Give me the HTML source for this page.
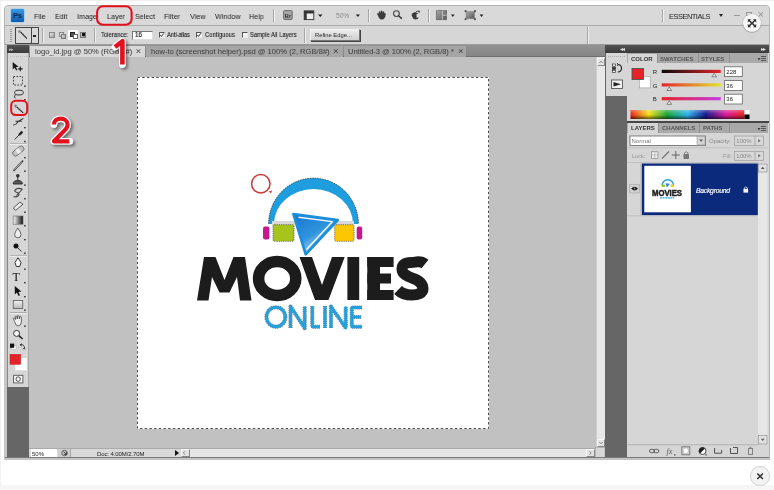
<!DOCTYPE html>
<html><head><meta charset="utf-8">
<style>
*{margin:0;padding:0;box-sizing:border-box}
html,body{width:774px;height:490px;overflow:hidden;background:#fff;font-family:"Liberation Sans",sans-serif;position:relative}
.a{position:absolute}
.t{position:absolute;white-space:nowrap;color:#1e1e1e;line-height:1;will-change:transform}
.m{font-size:8px;top:12.5px;color:#222;transform:scaleX(.9);transform-origin:0 0}
.o{font-size:7.4px;top:31.3px;color:#1a1a1a;-webkit-text-stroke:0.1px #1a1a1a;transform:scaleX(.8);transform-origin:0 0}
.tb{font-size:7.6px;top:47.6px;color:#444;-webkit-text-stroke:0.05px #444}
.sep{position:absolute;width:1px;background:#a6a6a6;box-shadow:1px 0 0 #f0f0f0}
.tri{position:absolute;width:0;height:0;border-left:2px solid transparent;border-right:2px solid transparent;border-top:3px solid #222}
.cb{position:absolute;width:6px;height:6px;border:1px solid #555;border-right-color:#eee;border-bottom-color:#eee;background:#f4f4f4}
svg{position:absolute;overflow:visible}
</style></head><body>
<div class="a" style="left:0;top:0;width:774px;height:1px;background:#f0f0f0"></div>
<div class="a" style="left:0;top:0;width:1px;height:490px;background:#f2f2f2"></div>
<!-- window frame -->
<div class="a" style="left:4px;top:5px;width:766px;height:454px;background:#d6d6d6;border:1px solid #b4b4b4;border-radius:4px 4px 0 0"></div>
<!-- menu bar -->
<div class="a" style="left:5px;top:6px;width:764px;height:19px;background:#d9d9d9;border-radius:3px 3px 0 0"></div>
<div class="a" style="left:5px;top:25px;width:764px;height:1px;background:#ababab"></div>
<!-- options bar -->
<div class="a" style="left:5px;top:26px;width:764px;height:18px;background:#d6d6d6"></div>
<div class="a" style="left:5px;top:44px;width:764px;height:1px;background:#9c9c9c"></div>

<!-- Ps logo -->
<div class="a" style="left:11px;top:9.2px;width:13px;height:12.8px;background:linear-gradient(#3a98e0,#0c5cb0);border-radius:1px;box-shadow:0 0 0 0.8px #a8cdec"></div>
<div class="t" style="left:12.6px;top:11.6px;font-size:7.6px;font-weight:700;color:#0a2550;letter-spacing:-0.2px">Ps</div>

<!-- menu items -->
<div class="t m" style="left:34px">File</div>
<div class="t m" style="left:55px">Edit</div>
<div class="t m" style="left:76.5px">Image</div>
<div class="t m" style="left:106.8px">Layer</div>
<div class="t m" style="left:134.5px">Select</div>
<div class="t m" style="left:163.5px">Filter</div>
<div class="t m" style="left:189.7px">View</div>
<div class="t m" style="left:214.6px">Window</div>
<div class="t m" style="left:249.4px">Help</div>

<!-- Br -->
<svg style="left:0;top:0" width="774" height="30" viewBox="0 0 774 30">
<defs><linearGradient id="ig" x1="0" y1="0" x2="1" y2="1"><stop offset="0" stop-color="#aaa"/><stop offset="1" stop-color="#555"/></linearGradient></defs>
<rect x="283.6" y="10.6" width="8.6" height="8.9" rx="1" fill="#a8a8a8" stroke="#606060" stroke-width="0.9"/>
<text x="284.8" y="17.6" font-family="Liberation Sans" font-weight="700" font-size="5.8" fill="#333">Br</text>
<rect x="304.2" y="10.9" width="9.6" height="8.7" fill="#eee" stroke="#333" stroke-width="0.9"/>
<rect x="304.2" y="10.9" width="9.6" height="2.6" fill="#333"/>
<rect x="304.2" y="10.9" width="2.5" height="8.7" fill="#333"/>
<path d="M318 14.4 H322.6 L320.3 17 Z" fill="#222"/>
<text x="336" y="17.8" font-family="Liberation Sans" font-size="6.6" fill="#8a8a8a">50%</text>
<path d="M355.8 14.4 H360 L357.9 17 Z" fill="#222"/>
<path d="M378 15.5 Q376.5 13.5 377.3 13 Q378.2 12.8 378.8 14 L378.8 11.8 Q379.4 10.9 380.2 11.8 L380.5 13 L380.8 10.8 Q381.6 10.2 382.3 11 L382.4 13 L382.9 11.5 Q383.8 11 384.3 12 L384.3 13.5 Q385 12.8 385.8 13.4 L385.3 16.5 Q384.5 19.6 381.5 19.6 Q379.2 19.5 378 15.5 Z" fill="#3a3a3a"/>
<circle cx="396.4" cy="13.6" r="2.9" fill="none" stroke="#444" stroke-width="1.1"/>
<path d="M398.5 15.7 L401.8 18.6" stroke="#333" stroke-width="1.5"/>
<path d="M412 16 Q411 13.5 413 13 L415 12 Q417 12.5 418.5 14 L419 17 Q418 19.6 415.5 19.6 Q413 19.5 412 16 Z" fill="#3a3a3a"/>
<path d="M416 11.5 Q418.5 10 419.5 12.5" fill="none" stroke="#444" stroke-width="0.9"/>
<path d="M418.8 10 L420.2 11.8 L418.3 12.4 Z" fill="#444"/>
<rect x="416.5" y="14" width="2.5" height="3.5" fill="#ddd"/>
<rect x="436.6" y="10.7" width="10" height="9" fill="url(#ig)" stroke="#666" stroke-width="0.8"/>
<path d="M442.4 10.7 V19.7 M442.4 15.2 H446.6" stroke="#ddd" stroke-width="0.7"/>
<path d="M451 14.4 H454.6 L452.8 16.9 Z" fill="#222"/>
<rect x="466" y="11.6" width="8.6" height="7.2" fill="url(#ig)" stroke="#888" stroke-width="0.6"/>
<circle cx="465.6" cy="11.2" r="1.1" fill="#555"/><circle cx="475" cy="11.2" r="1.1" fill="#555"/>
<circle cx="465.6" cy="19.2" r="1.1" fill="#555"/><circle cx="475" cy="19.2" r="1.1" fill="#555"/>
<path d="M479.6 14.4 H483.4 L481.5 16.9 Z" fill="#222"/>
</svg>
<div class="sep" style="left:273px;top:9px;height:13px"></div>
<div class="sep" style="left:367.5px;top:9px;height:13px"></div>
<div class="sep" style="left:428px;top:9px;height:13px"></div>
<div class="sep" style="left:662px;top:9px;height:13px"></div>
<div class="t" style="left:669px;top:12.5px;font-size:7.4px;color:#222;letter-spacing:-0.45px">ESSENTIALS</div>
<div class="tri" style="left:719px;top:14px"></div>
<div class="a" style="left:734.3px;top:15.2px;width:5.7px;height:1px;background:#999"></div>
<svg style="left:0;top:0" width="774" height="30" viewBox="0 0 774 30"><path d="M758.3 12 L763.2 16.8 M763.2 12 L758.3 16.8" stroke="#888" stroke-width="0.9"/></svg>
<div class="a" style="left:746px;top:12px;width:5.5px;height:4px;border:1px solid #999;border-top-width:1.5px"></div>

<!-- ============ options bar ============ -->
<div class="a" style="left:9.5px;top:29px;width:2px;height:13px;background:repeating-linear-gradient(#9a9a9a 0 1px,transparent 1px 2px)"></div>
<div class="a" style="left:15px;top:27px;width:24px;height:17px;border:1px solid #444;background:#d8d8d8"></div>
<div class="a" style="left:31px;top:27px;width:1px;height:17px;background:#444"></div>
<svg style="left:17px;top:29px" width="13" height="12" viewBox="0 0 13 12"><path d="M3.5 3 L10 9.6" stroke="#2a2a2a" stroke-width="1.1"/><path d="M0.8 2.5 H4.2 M2.5 0.8 V4.2 M1.3 1.3 L3.7 3.7 M3.7 1.3 L1.3 3.7" stroke="#777" stroke-width="0.5"/></svg>
<div class="a" style="left:33.5px;top:35px;width:2px;height:1px;border-top:1px solid #222"></div>
<div class="a" style="left:33px;top:34.5px;width:3px;height:2px;background:#222"></div>
<div class="sep" style="left:41.5px;top:28px;height:15px"></div>
<!-- selection modes -->
<div class="a" style="left:49px;top:32px;width:5.8px;height:6.3px;background:linear-gradient(135deg,#e8e8e8,#9c9c9c);border:0.8px solid #888"></div>
<div class="a" style="left:58.6px;top:31.6px;width:5.2px;height:5.2px;background:linear-gradient(135deg,#eee,#aaa);border:0.8px solid #888"></div>
<div class="a" style="left:60.8px;top:33.6px;width:5.2px;height:5.2px;background:linear-gradient(135deg,#e4e4e4,#999);border:0.8px solid #777"></div>
<div class="a" style="left:68.3px;top:29.6px;width:10.2px;height:10.4px;background:#fafafa"></div>
<div class="a" style="left:70.3px;top:31.6px;width:5.2px;height:5.2px;background:#555;border:0.8px solid #222"></div>
<div class="a" style="left:72.6px;top:33.8px;width:5.2px;height:5.2px;background:#fff;border:0.8px solid #666"></div>
<div class="a" style="left:80.4px;top:31.6px;width:5.6px;height:6.4px;background:linear-gradient(135deg,#ddd,#888);border:0.8px solid #777"></div>
<div class="a" style="left:82px;top:33px;width:3px;height:3px;background:#111"></div>
<div class="sep" style="left:93.5px;top:28px;height:15px"></div>

<div class="t o" style="left:101px">Tolerance:</div>
<div class="a" style="left:132px;top:30.5px;width:21px;height:9px;background:#fff;border:1px solid #777;border-right-color:#ddd;border-bottom-color:#ddd"></div>
<div class="t" style="left:135px;top:32.2px;font-size:6.3px;color:#222;-webkit-text-stroke:0.15px #222">16</div>
<div class="cb" style="left:158.5px;top:32px"></div>
<svg style="left:159.5px;top:33px" width="4" height="4"><path d="M0.3 2 L1.5 3.5 L3.8 0.3" stroke="#222" stroke-width="0.9" fill="none"/></svg>
<div class="t o" style="left:166.5px;letter-spacing:-0.2px">Anti-alias</div>
<div class="cb" style="left:196px;top:32px"></div>
<svg style="left:197px;top:33px" width="4" height="4"><path d="M0.3 2 L1.5 3.5 L3.8 0.3" stroke="#222" stroke-width="0.9" fill="none"/></svg>
<div class="t o" style="left:204.6px">Contiguous</div>
<div class="cb" style="left:242.4px;top:32px"></div>
<div class="t o" style="left:250px;letter-spacing:-0.05px">Sample All Layers</div>
<div class="sep" style="left:303.5px;top:28px;height:15px"></div>
<div class="a" style="left:309.5px;top:29px;width:50px;height:12px;background:linear-gradient(#ececec,#d0d0d0);border:1px solid #777;border-top-color:#f4f4f4;border-left-color:#f4f4f4;box-shadow:1px 1px 0 #444"></div>
<div class="t" style="left:315px;top:32.5px;font-size:5.8px;color:#222">Refine Edge...</div>
<div class="sep" style="left:586.5px;top:27px;height:17px"></div>

<!-- ============ left toolbar ============ -->
<div class="a" style="left:4px;top:45px;width:3px;height:413px;background:#c6c6c6"></div>
<div class="a" style="left:7px;top:45px;width:22px;height:8px;background:linear-gradient(#525252,#3a3a3a)"></div>
<div class="t" style="left:9px;top:46.5px;font-size:5px;color:#bbb;letter-spacing:-1.2px">▸▸</div>
<div class="a" style="left:7px;top:53px;width:22px;height:334px;background:#d6d6d6;border-left:1px solid #8a8a8a;border-right:1px solid #a8a8a8"></div>
<div class="a" style="left:7px;top:387px;width:22px;height:71px;background:#666"></div>
<svg style="left:0;top:0" width="774" height="490" viewBox="0 0 774 490">
<g fill="none" stroke="#333" stroke-width="1">
<path d="M10 56.5 H27" stroke="#bdbdbd" stroke-dasharray="1 1"/>
<path d="M10 143.4 H27 M10 255.4 H27 M10 312.6 H27" stroke="#a8a8a8"/>
<path d="M10 144.4 H27 M10 256.4 H27 M10 313.6 H27" stroke="#eeeeee"/>
</g>
<g fill="#1a1a1a">
<path d="M12.7 62 L12.7 69.5 L14.6 67.7 L16.2 70.6 L17.4 70 L15.9 67.2 L18.5 66.8 Z"/>
<path d="M18 68.9 H22.6 M20.3 66.6 V71.2" stroke="#1a1a1a" stroke-width="1.1"/>
<rect x="24.2" y="85.5" width="1.4" height="1.4"/><rect x="24.2" y="99" width="1.4" height="1.4"/>
<rect x="24.2" y="127" width="1.4" height="1.4"/><rect x="24.2" y="140.8" width="1.4" height="1.4"/>
<rect x="24.2" y="157" width="1.4" height="1.4"/><rect x="24.2" y="170.5" width="1.4" height="1.4"/>
<rect x="24.2" y="184.5" width="1.4" height="1.4"/><rect x="24.2" y="198" width="1.4" height="1.4"/>
<rect x="24.2" y="211.5" width="1.4" height="1.4"/><rect x="24.2" y="225" width="1.4" height="1.4"/>
<rect x="24.2" y="239" width="1.4" height="1.4"/><rect x="24.2" y="252.5" width="1.4" height="1.4"/>
<rect x="24.2" y="268.5" width="1.4" height="1.4"/><rect x="24.2" y="282" width="1.4" height="1.4"/>
<rect x="24.2" y="296" width="1.4" height="1.4"/><rect x="24.2" y="309.5" width="1.4" height="1.4"/>
<rect x="24.2" y="325.5" width="1.4" height="1.4"/>
</g>
<rect x="13.5" y="76.5" width="9" height="8.5" fill="none" stroke="#444" stroke-width="1" stroke-dasharray="1.6 1.4"/>
<ellipse cx="19" cy="92.6" rx="4.4" ry="2.4" fill="none" stroke="#333" stroke-width="1"/>
<path d="M15.5 94.3 Q13.8 96 15 98.3" fill="none" stroke="#333" stroke-width="1"/>
<path d="M16.6 106.8 L23.2 112.8" stroke="#222" stroke-width="1.1"/>
<path d="M13.8 106 H17.4 M15.6 104.2 V107.8 M14.3 104.7 L16.9 107.3 M16.9 104.7 L14.3 107.3" stroke="#666" stroke-width="0.5"/>
<path d="M13.2 125.2 Q16.5 124.5 18.3 121.5 L23.4 118.4 M15.5 121.2 H21.8" fill="none" stroke="#333" stroke-width="1.1"/>
<path d="M14.7 139.5 L20 134" stroke="#333" stroke-width="1"/>
<path d="M19 135 L22.4 131.6" stroke="#222" stroke-width="2.4"/>
<rect x="12" y="148.3" width="12.5" height="5.6" rx="2.6" transform="rotate(-38 18.2 151)" fill="#c4c4c4" stroke="#666" stroke-width="0.8"/><rect x="16.4" y="148.6" width="3.6" height="5" transform="rotate(-38 18.2 151)" fill="#eee"/>
<path d="M14 170.4 L22.6 161.2" stroke="#444" stroke-width="1.8" stroke-linecap="round"/>
<path d="M14.6 169.6 L21.8 162" stroke="#eee" stroke-width="0.6"/>
<circle cx="17.8" cy="175.8" r="1.8" fill="#333"/>
<path d="M17.8 177 V180 M13.2 184 Q13 180.5 17.8 180.5 Q22.5 180.5 22.3 184 Z" fill="#555" stroke="#333" stroke-width="1"/>
<path d="M22.5 189.5 Q19 187.2 15.5 189.5 Q13.5 191.5 17 192.5 Q20.5 193.5 18 196 Q16 197.5 13.5 196.5 M16.5 195.5 L22.5 189" fill="none" stroke="#444" stroke-width="1.1"/>
<path d="M15.8 210.2 L13.2 208.2 L19.8 202.2 L23 204.2 Z" fill="#eee" stroke="#444" stroke-width="0.9"/>
<defs><linearGradient id="gr" x1="0" x2="1"><stop offset="0" stop-color="#fff"/><stop offset="1" stop-color="#111"/></linearGradient></defs>
<rect x="13.2" y="216" width="9.8" height="8.2" fill="url(#gr)" stroke="#666" stroke-width="0.6"/>
<path d="M17.8 228 Q14.6 232.5 14.6 234.6 Q14.6 237.8 17.8 237.8 Q21 237.8 21 234.6 Q21 232.5 17.8 228 Z" fill="#f0f0f0" stroke="#555" stroke-width="0.9"/>
<circle cx="16" cy="246" r="2.5" fill="#111"/>
<path d="M17.5 247.5 L21.5 251.5" stroke="#333" stroke-width="1"/>
<path d="M18 257.8 L15 262.5 L16.3 266.5 H19.7 L21 262.5 Z" fill="#fff" stroke="#333" stroke-width="1"/>
<text x="12.6" y="281.2" font-family="Liberation Serif" font-size="12" fill="#111">T</text>
<path d="M14.8 286 L14.8 294.5 L16.8 292.6 L18.6 296 L20 295.2 L18.4 292 L21.4 291.4 Z" fill="#111"/>
<defs><linearGradient id="rg" x1="0" y1="0" x2="0" y2="1"><stop offset="0" stop-color="#f4f4f4"/><stop offset="1" stop-color="#b8b8b8"/></linearGradient></defs>
<rect x="13.3" y="300.5" width="9.4" height="8" fill="url(#rg)" stroke="#666" stroke-width="0.9"/>
<path d="M14.5 321.5 L13.3 318.5 Q13.5 317.5 14.7 318.3 L15.6 319.5 L15.3 316.5 Q15.8 315.6 16.8 316.4 L17.3 319 L17.6 315.8 Q18.4 315.2 19.1 316 L19.3 319 L19.8 316.6 Q20.6 316 21.3 316.9 L21.4 322 Q21 325.8 18 326 Q15.8 326 14.5 321.5 Z" fill="#f2f2f2" stroke="#444" stroke-width="0.8"/>
<circle cx="16.6" cy="333.4" r="3" fill="#fafafa" stroke="#333" stroke-width="1"/>
<path d="M18.8 335.6 L22.6 339" stroke="#222" stroke-width="1.6"/>
<rect x="12" y="345.6" width="4" height="4" fill="#fff" stroke="#aaa" stroke-width="0.5"/>
<rect x="10" y="343.6" width="4.2" height="4.2" fill="#111"/>
<path d="M20.5 344.5 Q24 344 24.8 348.5 M20 345 L21.5 343.5 M20 345 L21.8 346 M24 348 L25 349.5 M24 348 L23 349.3" fill="none" stroke="#333" stroke-width="0.9"/>
<rect x="15" y="357.9" width="12" height="12.8" fill="#fff" stroke="#d0d0d0" stroke-width="0.5"/>
<rect x="10" y="354.3" width="10.7" height="10" fill="#e3232a" stroke="#c21a1e" stroke-width="0.5"/>
<rect x="13.6" y="375.3" width="9.3" height="7.6" fill="#f4f4f4" stroke="#555" stroke-width="0.9"/>
<circle cx="18.2" cy="379.1" r="2.2" fill="none" stroke="#444" stroke-width="0.9"/>
</svg>

<!-- ============ tab bar ============ -->
<div class="a" style="left:29px;top:45px;width:576px;height:12px;background:linear-gradient(#939393,#858585);border-bottom:1px solid #6e6e6e"></div>
<div class="a" style="left:30px;top:46px;width:115px;height:11px;background:#d8d8d8"></div>
<div class="t tb" style="left:34.5px">logo_id.jpg @ 50% (RGb/8#)</div>

<div class="a" style="left:146px;top:46px;width:197px;height:11px;background:#a5a5a5"></div>
<div class="t tb" style="left:150.5px">how-to (screenshot helper).psd @ 100% (2, RGB/8#)</div>

<div class="a" style="left:344px;top:46px;width:122px;height:11px;background:#a5a5a5"></div>
<div class="t tb" style="left:347.7px;letter-spacing:-0.05px">Untitled-3 @ 100% (2, RGB/8) *</div>


<svg style="left:0;top:0" width="774" height="60" viewBox="0 0 774 60"><path d="M136.6 49.3 L140.2 52.9 M140.2 49.3 L136.6 52.9 M334 49.3 L337.6 52.9 M337.6 49.3 L334 52.9 M459 49.3 L462.6 52.9 M462.6 49.3 L459 52.9" stroke="#444" stroke-width="1"/></svg>
<!-- ============ canvas ============ -->
<div class="a" style="left:29px;top:57px;width:567px;height:391px;background:#c1c1c1"></div>
<div class="a" style="left:137px;top:77px;width:352px;height:352px;background:#fff"></div>
<svg style="left:0;top:0" width="774" height="490" viewBox="0 0 774 490"><rect x="137.5" y="77.5" width="351" height="351" fill="none" stroke="#4a4a4a" stroke-width="1" stroke-dasharray="2.4 2.3"/></svg>
<svg style="left:0;top:0" width="774" height="490" viewBox="0 0 774 490">
<defs>
<linearGradient id="pg" x1="0.1" y1="0" x2="0.75" y2="1"><stop offset="0" stop-color="#1878d0"/><stop offset="0.5" stop-color="#2f94de"/><stop offset="1" stop-color="#e4f2fc"/></linearGradient>
</defs>
<!-- headphone arc -->
<path d="M268.5 224 A45 46 0 0 1 358.5 224 L353 224 A39.5 35 0 0 0 274 224 Z" fill="#1e9ede"/>
<path d="M268.6 224 A44.9 45.9 0 0 1 358.4 224" fill="none" stroke="#333" stroke-width="0.9" stroke-dasharray="1.4 1.1" opacity="0.85"/>
<!-- pads -->
<rect x="272" y="221" width="23" height="5" fill="#d9d9d9"/>
<rect x="334" y="221" width="20" height="5" fill="#d9d9d9"/>
<rect x="273" y="224.7" width="21" height="16.6" rx="1.5" fill="#a6c41c" stroke="#444" stroke-width="0.7" stroke-dasharray="1.2 1"/>
<rect x="334.7" y="224.7" width="19.3" height="16.6" rx="1.5" fill="#fcc700" stroke="#444" stroke-width="0.7" stroke-dasharray="1.2 1"/>
<rect x="263" y="226.6" width="6.4" height="12.8" rx="2" fill="#c7198e"/>
<rect x="356.7" y="226.6" width="5.5" height="12.8" rx="2" fill="#c7198e"/>
<!-- play -->
<path d="M293.4 214 L337.7 220.1 L305.7 254.3 Z" fill="url(#pg)" stroke="#1a8ed8" stroke-width="2.6" stroke-linejoin="round"/>
<path d="M298.5 217.2 L332.5 221.6 L306.5 249.5" fill="none" stroke="#fff" stroke-width="1.4" opacity="0.95" stroke-linejoin="round"/>
<!-- MOVIES -->
<g fill="#1c1c1c">
<path d="M197 300.5 L204 257 L215.5 257 L224.5 280 L233.5 257 L245 257 L251.5 300.5 L240 300.5 L237 277 L229.5 292.5 L219.5 292.5 L212 277 L208.5 300.5 Z"/>
<ellipse cx="277.2" cy="278.5" rx="18.6" ry="17" fill="none" stroke="#1c1c1c" stroke-width="11.5"/>
<path d="M299.5 257 L312 257 L322 285 L332 257 L344.7 257 L328.5 300 L315 300 Z"/>
<rect x="347.4" y="257" width="11.8" height="43"/>
<rect x="367.3" y="257" width="12.7" height="43"/>
<rect x="367.3" y="257" width="26.3" height="10"/>
<rect x="367.3" y="273.5" width="23.7" height="10"/>
<rect x="367.3" y="290" width="26.3" height="10"/>
<path d="M425 264 C420 260 416 262.5 411 262.5 C405 262.5 402 265 402 269 C402 274 407 276 412 278 C418 280 423 283 423 289 C423 293 418 295 412 295 C406 295 402 294 398 290" fill="none" stroke="#1c1c1c" stroke-width="11"/>
</g>
<!-- ONLINE ants -->
<g fill="none" stroke="#2a4a60" stroke-width="4.1" stroke-dasharray="1.2 0.9" opacity="0.7" stroke-linejoin="round">
<ellipse cx="275.9" cy="317" rx="9.4" ry="9.7"/>
<path d="M290.5 328 V306.5 L304.7 328 V306.5"/>
<path d="M312.3 306 V326.7 H320"/>
<path d="M325 306 V328"/>
<path d="M331 328 V306.5 L345.7 328 V306.5"/>
<path d="M362 307.5 H351.8 V326.7 H362 M351.8 317 H361"/>
</g>
<!-- ONLINE -->
<g fill="none" stroke="#26a0dc" stroke-width="3" stroke-linejoin="round">
<ellipse cx="275.9" cy="317" rx="9.4" ry="9.7"/>
<path d="M290.5 328 V306.5 L304.7 328 V306.5"/>
<path d="M312.3 306 V326.7 H320"/>
<path d="M325 306 V328"/>
<path d="M331 328 V306.5 L345.7 328 V306.5"/>
<path d="M362 307.5 H351.8 V326.7 H362 M351.8 317 H361"/>
</g>
<!-- cursor circle -->
<circle cx="260.8" cy="183.8" r="9.2" fill="none" stroke="#c83838" stroke-width="1.5"/>
<path d="M268.8 191.5 L272 190.5 L271 193.5 Z" fill="#c83838"/>
</svg>

<!-- vertical scrollbar -->
<div class="a" style="left:596px;top:57px;width:9px;height:390px;background:#e8e8e8;border-left:1px solid #cfcfcf"></div>
<div class="a" style="left:597px;top:58px;width:8px;height:8px;background:#e2e2e2;border:1px solid #f8f8f8;border-right-color:#888;border-bottom-color:#888"></div>
<div class="a" style="left:597px;top:439px;width:8px;height:8px;background:#e2e2e2;border:1px solid #f8f8f8;border-right-color:#888;border-bottom-color:#888"></div>

<!-- status bar -->
<div class="a" style="left:29px;top:448px;width:576px;height:10px;background:#d9d9d9;border-top:1px solid #aaa"></div>
<div class="a" style="left:31px;top:449px;width:26px;height:8px;background:#fff"></div>
<div class="t" style="left:32px;top:450.5px;font-size:6px;color:#222">50%</div>
<div class="a" style="left:58px;top:449px;width:13px;height:8px;background:#cfcfcf;border-right:1px solid #aaa"></div>
<div class="t" style="left:97px;top:450.5px;font-size:6px;color:#222;letter-spacing:-0.1px">Doc: 4.00M/2.70M</div>
<div class="a" style="left:175px;top:450px;width:0;height:0;border-top:3px solid transparent;border-bottom:3px solid transparent;border-left:4px solid #111"></div>
<div class="a" style="left:181px;top:449px;width:9px;height:8px;background:#e2e2e2;border:1px solid #f8f8f8;border-right-color:#888;border-bottom-color:#888"></div>
<div class="a" style="left:190px;top:449px;width:406px;height:8px;background:#e6e6e6"></div>
<div class="a" style="left:586px;top:449px;width:9px;height:8px;background:#e2e2e2;border:1px solid #f8f8f8;border-right-color:#888;border-bottom-color:#888"></div>

<svg style="left:0;top:0" width="774" height="490" viewBox="0 0 774 490">
<path d="M599.3 63 L601 61.2 L602.7 63" fill="none" stroke="#666" stroke-width="0.7"/>
<path d="M599.3 442 L601 443.8 L602.7 442" fill="none" stroke="#666" stroke-width="0.7"/>
<path d="M185 451.3 L183.3 453 L185 454.7" fill="none" stroke="#666" stroke-width="0.7"/>
<path d="M589.5 451.3 L591.2 453 L589.5 454.7" fill="none" stroke="#666" stroke-width="0.7"/>
<rect x="595.5" y="447.5" width="9.5" height="10" fill="#d8d8d8" stroke="#999" stroke-width="0.6"/>
<circle cx="64.5" cy="453" r="2.8" fill="#bbb" stroke="#555" stroke-width="0.8"/>
<path d="M63.5 451.5 L66.5 454.5 M64 454.6 H66.6 V452" fill="none" stroke="#222" stroke-width="0.7"/>
</svg>
<!-- ============ panels ============ -->
<div class="a" style="left:605px;top:45px;width:164px;height:8px;background:linear-gradient(#525252,#3a3a3a)"></div>
<div class="t" style="left:620px;top:46px;font-size:6px;color:#ddd;letter-spacing:-1.5px">◂◂</div>
<div class="t" style="left:761px;top:46px;font-size:6px;color:#ddd;letter-spacing:-1.5px">▸▸</div>
<div class="a" style="left:605px;top:53px;width:22px;height:405px;background:#666"></div>
<div class="a" style="left:606px;top:53px;width:21px;height:43px;background:#d6d6d6"></div>
<div class="a" style="left:627px;top:53px;width:142px;height:405px;background:#d6d6d6"></div>
<!-- color tabs -->
<div class="a" style="left:627px;top:53px;width:141px;height:10px;background:#a9a9a9"></div>
<div class="a" style="left:628px;top:54px;width:29px;height:9px;background:#d6d6d6"></div>
<div class="t" style="left:631px;top:55.5px;font-size:6px;font-weight:700;color:#333">COLOR</div>
<div class="t" style="left:660px;top:55.5px;font-size:6px;font-weight:700;color:#555">SWATCHES</div>
<div class="t" style="left:701px;top:55.5px;font-size:6px;font-weight:700;color:#555">STYLES</div>
<div class="a" style="left:627px;top:121px;width:142px;height:2px;background:#474747"></div>
<!-- layers tabs -->
<div class="a" style="left:627px;top:123px;width:141px;height:10px;background:#a9a9a9"></div>
<div class="a" style="left:628px;top:123px;width:30px;height:10px;background:#d6d6d6"></div>
<div class="t" style="left:631px;top:125px;font-size:6px;font-weight:700;color:#333">LAYERS</div>
<div class="t" style="left:662px;top:125px;font-size:6px;font-weight:700;color:#555">CHANNELS</div>
<div class="t" style="left:703px;top:125px;font-size:6px;font-weight:700;color:#555">PATHS</div>
<!-- panel icon column -->
<div class="a" style="left:608px;top:55.5px;width:17px;height:1px;background:repeating-linear-gradient(90deg,#aaa 0 1px,transparent 1px 2px)"></div>
<svg style="left:0;top:0" width="774" height="490" viewBox="0 0 774 490">
<rect x="612.5" y="64" width="3" height="2.2" fill="#fff" stroke="#333" stroke-width="0.7"/>
<rect x="612.5" y="67.2" width="3" height="2.2" fill="#333" stroke="#333" stroke-width="0.7"/>
<rect x="612.5" y="70.4" width="3" height="2.2" fill="#fff" stroke="#333" stroke-width="0.7"/>
<path d="M617.5 64.5 Q621.5 64.5 621.5 68.3 Q621.5 71.8 617.8 72" fill="none" stroke="#222" stroke-width="1.1"/>
<path d="M617 63 L618.5 64.5 L617 66" fill="none" stroke="#222" stroke-width="0.8"/>
<rect x="611.5" y="80" width="11" height="8.5" fill="#f0f0f0" stroke="#444" stroke-width="0.8"/>
<path d="M613.5 82 L621 84.2 L613.5 86.6 Z" fill="#222"/>
<!-- color panel -->
<defs>
<linearGradient id="sr" x1="0" x2="1"><stop offset="0" stop-color="#0a0a0a"/><stop offset="1" stop-color="#e4242a"/></linearGradient>
<linearGradient id="sg" x1="0" x2="1"><stop offset="0" stop-color="#e4242a"/><stop offset="1" stop-color="#e4e42a"/></linearGradient>
<linearGradient id="sb" x1="0" x2="1"><stop offset="0" stop-color="#e4242a"/><stop offset="1" stop-color="#c43ce4"/></linearGradient>
<linearGradient id="spec" x1="0" x2="1">
<stop offset="0" stop-color="#e8221c"/><stop offset="0.16" stop-color="#f4e01c"/><stop offset="0.32" stop-color="#1aa83a"/><stop offset="0.5" stop-color="#30b4ec"/><stop offset="0.66" stop-color="#1a1a90"/><stop offset="0.84" stop-color="#e01c9a"/><stop offset="1" stop-color="#e8221c"/></linearGradient>
<linearGradient id="specv" x1="0" y1="0" x2="0" y2="1"><stop offset="0" stop-color="#fff" stop-opacity="0.3"/><stop offset="0.45" stop-color="#fff" stop-opacity="0"/><stop offset="0.55" stop-color="#000" stop-opacity="0"/><stop offset="1" stop-color="#000" stop-opacity="0.6"/></linearGradient>
</defs>
<rect x="639.3" y="76.3" width="11.2" height="11.6" fill="#fff" stroke="#999" stroke-width="0.6"/>
<rect x="632" y="68.5" width="11.5" height="11" fill="#e42228" stroke="#555" stroke-width="0.9"/>
<text x="652.8" y="74" font-family="Liberation Sans" font-size="6" fill="#222">R</text>
<text x="652.8" y="87.6" font-family="Liberation Sans" font-size="6" fill="#222">G</text>
<text x="652.8" y="101.3" font-family="Liberation Sans" font-size="6" fill="#222">B</text>
<rect x="661.7" y="69.8" width="59" height="3.2" fill="url(#sr)"/>
<rect x="661.7" y="83.3" width="59" height="3.2" fill="url(#sg)"/>
<rect x="661.7" y="97.1" width="59" height="3.2" fill="url(#sb)"/>
<path d="M714.2 73.3 L716.5 76.8 L711.9 76.8 Z" fill="#f4f4f4" stroke="#555" stroke-width="0.7"/>
<path d="M669.2 87 L671.5 90.5 L666.9 90.5 Z" fill="#f4f4f4" stroke="#555" stroke-width="0.7"/>
<path d="M669.2 100.8 L671.5 104.3 L666.9 104.3 Z" fill="#f4f4f4" stroke="#555" stroke-width="0.7"/>
<rect x="724.5" y="66.8" width="17.8" height="9.8" fill="#fff" stroke="#666" stroke-width="0.8"/>
<rect x="724.5" y="80.6" width="17.8" height="9.8" fill="#fff" stroke="#666" stroke-width="0.8"/>
<rect x="724.5" y="94.2" width="17.8" height="9.8" fill="#fff" stroke="#666" stroke-width="0.8"/>
<text x="726.3" y="74" font-family="Liberation Sans" font-size="6" fill="#222">228</text>
<text x="726.3" y="87.8" font-family="Liberation Sans" font-size="6" fill="#222">36</text>
<text x="726.3" y="101.4" font-family="Liberation Sans" font-size="6" fill="#222">36</text>
<rect x="630.5" y="110" width="114" height="9" fill="url(#spec)"/>
<rect x="630.5" y="110" width="114" height="9" fill="url(#specv)"/>
<rect x="744.5" y="110" width="5" height="4.5" fill="#fff"/>
<rect x="744.5" y="114.5" width="5" height="4.5" fill="#000"/>
<!-- panel menu icons -->
<path d="M758 58.5 L760 58.5 L759 59.7 Z M761 56.5 H766 M761 58.5 H766 M761 60.5 H766" fill="#333" stroke="#333" stroke-width="0.7"/>
<path d="M758 128.5 L760 128.5 L759 129.7 Z M761 126.5 H766 M761 128.5 H766 M761 130.5 H766" fill="#333" stroke="#333" stroke-width="0.7"/>
<!-- tab separators -->
<path d="M657.5 54 V63 M698.5 54 V63 M729.5 54 V63 M658.5 123 V133 M699.5 123 V133 M729.5 123 V133" stroke="#8a8a8a" stroke-width="0.8"/>
<!-- layers controls -->
<rect x="630" y="136" width="75.5" height="9.5" fill="#fff" stroke="#666" stroke-width="0.8"/>
<rect x="697" y="136.5" width="8" height="8.5" fill="#d4d4d4" stroke="#999" stroke-width="0.6"/>
<path d="M699.3 139.5 H703 L701.15 141.8 Z" fill="#555"/>
<text x="631.5" y="143" font-family="Liberation Sans" font-size="6" fill="#777">Normal</text>
<text x="709" y="143" font-family="Liberation Sans" font-size="6" fill="#888">Opacity:</text>
<rect x="734.5" y="136" width="29" height="9.5" fill="#d8d8d8" stroke="#999" stroke-width="0.7"/>
<path d="M755 136 V145.5" stroke="#999" stroke-width="0.7"/>
<text x="736.3" y="143" font-family="Liberation Sans" font-size="6" fill="#888">100%</text>
<path d="M758.3 139 L760.5 140.8 L758.3 142.6 Z" fill="#666"/>
<path d="M627 147.8 H768" stroke="#bdbdbd" stroke-width="0.8"/>
<text x="631.4" y="158" font-family="Liberation Sans" font-size="6" fill="#999">Lock:</text>
<rect x="651.5" y="151.8" width="6.5" height="6.5" fill="#eee" stroke="#777" stroke-width="0.6"/>
<path d="M651.5 155 H658 M654.75 151.8 V158.3" stroke="#999" stroke-width="0.5"/>
<path d="M662 158.5 L669 151.5" stroke="#777" stroke-width="1.3"/>
<path d="M675.8 151 V159 M671.8 155 H679.8" stroke="#666" stroke-width="1"/>
<rect x="683.5" y="154" width="5.5" height="5" rx="0.8" fill="#777"/>
<path d="M684.5 154 V152.8 Q686.2 150.8 688 152.8 V154" fill="none" stroke="#777" stroke-width="0.9"/>
<text x="722.8" y="158" font-family="Liberation Sans" font-size="6" fill="#999">Fill:</text>
<rect x="734.5" y="151.3" width="29" height="9" fill="#d8d8d8" stroke="#999" stroke-width="0.7"/>
<path d="M755 151.3 V160.3" stroke="#999" stroke-width="0.7"/>
<text x="736.3" y="158" font-family="Liberation Sans" font-size="6" fill="#888">100%</text>
<path d="M758.3 154 L760.5 155.8 L758.3 157.6 Z" fill="#666"/>
<path d="M627 162.5 H758" stroke="#bdbdbd" stroke-width="0.8"/>
<!-- layer row -->
<rect x="641.8" y="163.5" width="116" height="51.7" fill="#0c2a7c"/>
<rect x="644.3" y="165.8" width="46.6" height="46.5" fill="#fff"/>
<path d="M641 163.5 V215.5" stroke="#aaa" stroke-width="0.8"/>
<path d="M627 215.8 H758" stroke="#bbb" stroke-width="0.8"/>
<rect x="629.8" y="184.2" width="9.7" height="8.8" fill="#d0d0d0" stroke="#999" stroke-width="0.5"/>
<path d="M631.3 188.6 Q634.6 184.8 637.9 188.6 Q634.6 192.4 631.3 188.6 Z" fill="#111"/>
<circle cx="634.6" cy="188.6" r="1" fill="#888"/>
<text x="696" y="192.8" font-family="Liberation Sans" font-style="italic" font-size="6.8" fill="#fff" letter-spacing="-0.25" stroke="#fff" stroke-width="0.15">Background</text>
<rect x="743.5" y="188.8" width="4.6" height="3.8" fill="#fff"/>
<path d="M744.3 188.8 V187.8 Q745.8 186.2 747.3 187.8 V188.8" fill="none" stroke="#fff" stroke-width="0.7"/>
<!-- mini logo -->
<path d="M662 185.5 A5.8 5.8 0 0 1 673.6 185.5" fill="none" stroke="#22a0dc" stroke-width="1.4"/>
<rect x="661.8" y="184.5" width="3" height="2.5" fill="#a6c41c"/>
<rect x="670.8" y="184.5" width="3" height="2.5" fill="#fcc700"/>
<path d="M665.5 183.2 L670 183.8 L666.8 187.5 Z" fill="#2a90da"/>
<text x="652" y="196.2" font-family="Liberation Sans" font-weight="700" font-size="8.6" fill="#1c1c1c" stroke="#1c1c1c" stroke-width="0.5" textLength="30" lengthAdjust="spacingAndGlyphs">MOVIES</text>
<path d="M660 197.8 H674" stroke="#22a0dc" stroke-width="1.2" stroke-dasharray="2 0.6"/>
<!-- layers scrollbar -->
<rect x="758" y="163.5" width="9.5" height="281" fill="#e6e6e6"/>
<rect x="758.5" y="164" width="8.5" height="8" fill="#e0e0e0" stroke="#888" stroke-width="0.6"/>
<path d="M760.9 169 H764.6 L762.75 166.8 Z" fill="#555"/>
<rect x="758.5" y="435.5" width="8.5" height="8.5" fill="#e0e0e0" stroke="#888" stroke-width="0.6"/>
<path d="M760.9 438.8 H764.6 L762.75 441 Z" fill="#555"/>
<path d="M627.5 444.8 H758" stroke="#aaa" stroke-width="0.8"/>
<!-- bottom layer icons -->
<g fill="none" stroke="#555" stroke-width="0.9">
<rect x="649.5" y="449.3" width="5" height="3.4" rx="1.7"/><rect x="653.8" y="449.3" width="5" height="3.4" rx="1.7"/>
<rect x="681.8" y="446.8" width="8" height="8" fill="#ccc" stroke="#777"/>
<circle cx="685.8" cy="450.8" r="2.2" fill="#fff" stroke="none"/>
<circle cx="702.5" cy="451" r="3.5" fill="#fff" stroke="#333"/>
<path d="M699 451 A3.5 3.5 0 0 1 706 451 Z" fill="#222" stroke="none" transform="rotate(-45 702.5 451)"/>
<path d="M714.6 448 V453.2 H721.6 V450" stroke="#444"/>
<path d="M730.5 448 V453.5 H737.5 V447.5 H733" stroke="#444"/>
<path d="M748 448.5 H753 M748.5 448.5 V454.5 H752.5 V448.5 M749.5 447.3 H751.5" stroke="#777"/>
</g>
<text x="666.5" y="454" font-family="Liberation Serif" font-style="italic" font-size="8" fill="#555">fx</text>
<rect x="705.5" y="454.3" width="1.2" height="1.2" fill="#333"/>
<rect x="674.2" y="454.3" width="1.2" height="1.2" fill="#333"/>
</svg>
<svg style="left:0;top:0" width="774" height="490" viewBox="0 0 774 490">
<defs>
<filter id="sh" x="-50%" y="-50%" width="200%" height="200%"><feGaussianBlur in="SourceAlpha" stdDeviation="1.6"/><feOffset dx="1.5" dy="2" result="b"/><feComponentTransfer><feFuncA type="linear" slope="0.45"/></feComponentTransfer><feMerge><feMergeNode/><feMergeNode in="SourceGraphic"/></feMerge></filter>
</defs>
<rect x="97.1" y="6.3" width="34.5" height="18.5" rx="5.8" fill="none" stroke="#e3101e" stroke-width="2.1"/>
<rect x="11.2" y="100.8" width="16" height="14.3" rx="4.5" fill="none" stroke="#e3101e" stroke-width="2"/>
<g filter="url(#sh)" fill="none" stroke-linejoin="round" stroke-linecap="round">
<path d="M115 47 L122.4 41.2 V64.6" stroke="#fff" stroke-width="6.6"/>
<path d="M53.8 124.5 C54 120.5 57 118.7 60.7 118.7 C64.6 118.7 67.6 121.2 67.6 124.6 C67.6 127.5 66 129.5 63 132 L53.9 141.3 H69.8" stroke="#fff" stroke-width="6.6"/>
</g>
<g fill="none" stroke="#e3101e" stroke-linejoin="miter">
<path d="M115 47 L122.4 41.2 V64.6" stroke-width="4.6" stroke-linejoin="round"/>
<path d="M53.8 124.5 C54 120.5 57 118.7 60.7 118.7 C64.6 118.7 67.6 121.2 67.6 124.6 C67.6 127.5 66 129.5 63 132 L53.9 141.3 H69.3" stroke-width="4.2" stroke-linejoin="round"/>
</g>
</svg>
<div class="a" style="left:5px;top:457px;width:764px;height:1px;background:#7a7a7a"></div>
<div class="a" style="left:4px;top:458px;width:766px;height:1.5px;background:#c4c4c4"></div>
<div class="a" style="left:0;top:485px;width:774px;height:5px;background:#f6f6f6"></div>
<!-- fullscreen button -->
<div class="a" style="left:742.9px;top:14.3px;width:18.2px;height:18.2px;border-radius:50%;background:#f6f6f6;box-shadow:0 0.5px 1.5px rgba(0,0,0,.4)"></div>
<svg style="left:0;top:0" width="774" height="490" viewBox="0 0 774 490">
<g stroke="#333" stroke-width="1.5" fill="none">
<path d="M748.6 20 L755.4 26.4 M755.4 20 L748.6 26.4"/>
</g>
<g fill="#333">
<path d="M747.8 19.2 H751 L747.8 22.4 Z M756.2 19.2 H753 L756.2 22.4 Z M747.8 27.2 H751 L747.8 24 Z M756.2 27.2 H753 L756.2 24 Z"/>
</g>
<!-- close button -->
<circle cx="760" cy="476.1" r="9.6" fill="#f3f3f3" stroke="#c8c8c8" stroke-width="0.8"/>
<path d="M757.3 473.5 L762.9 479 M762.9 473.5 L757.3 479" stroke="#333" stroke-width="1.6"/>
</svg>
</body></html>
